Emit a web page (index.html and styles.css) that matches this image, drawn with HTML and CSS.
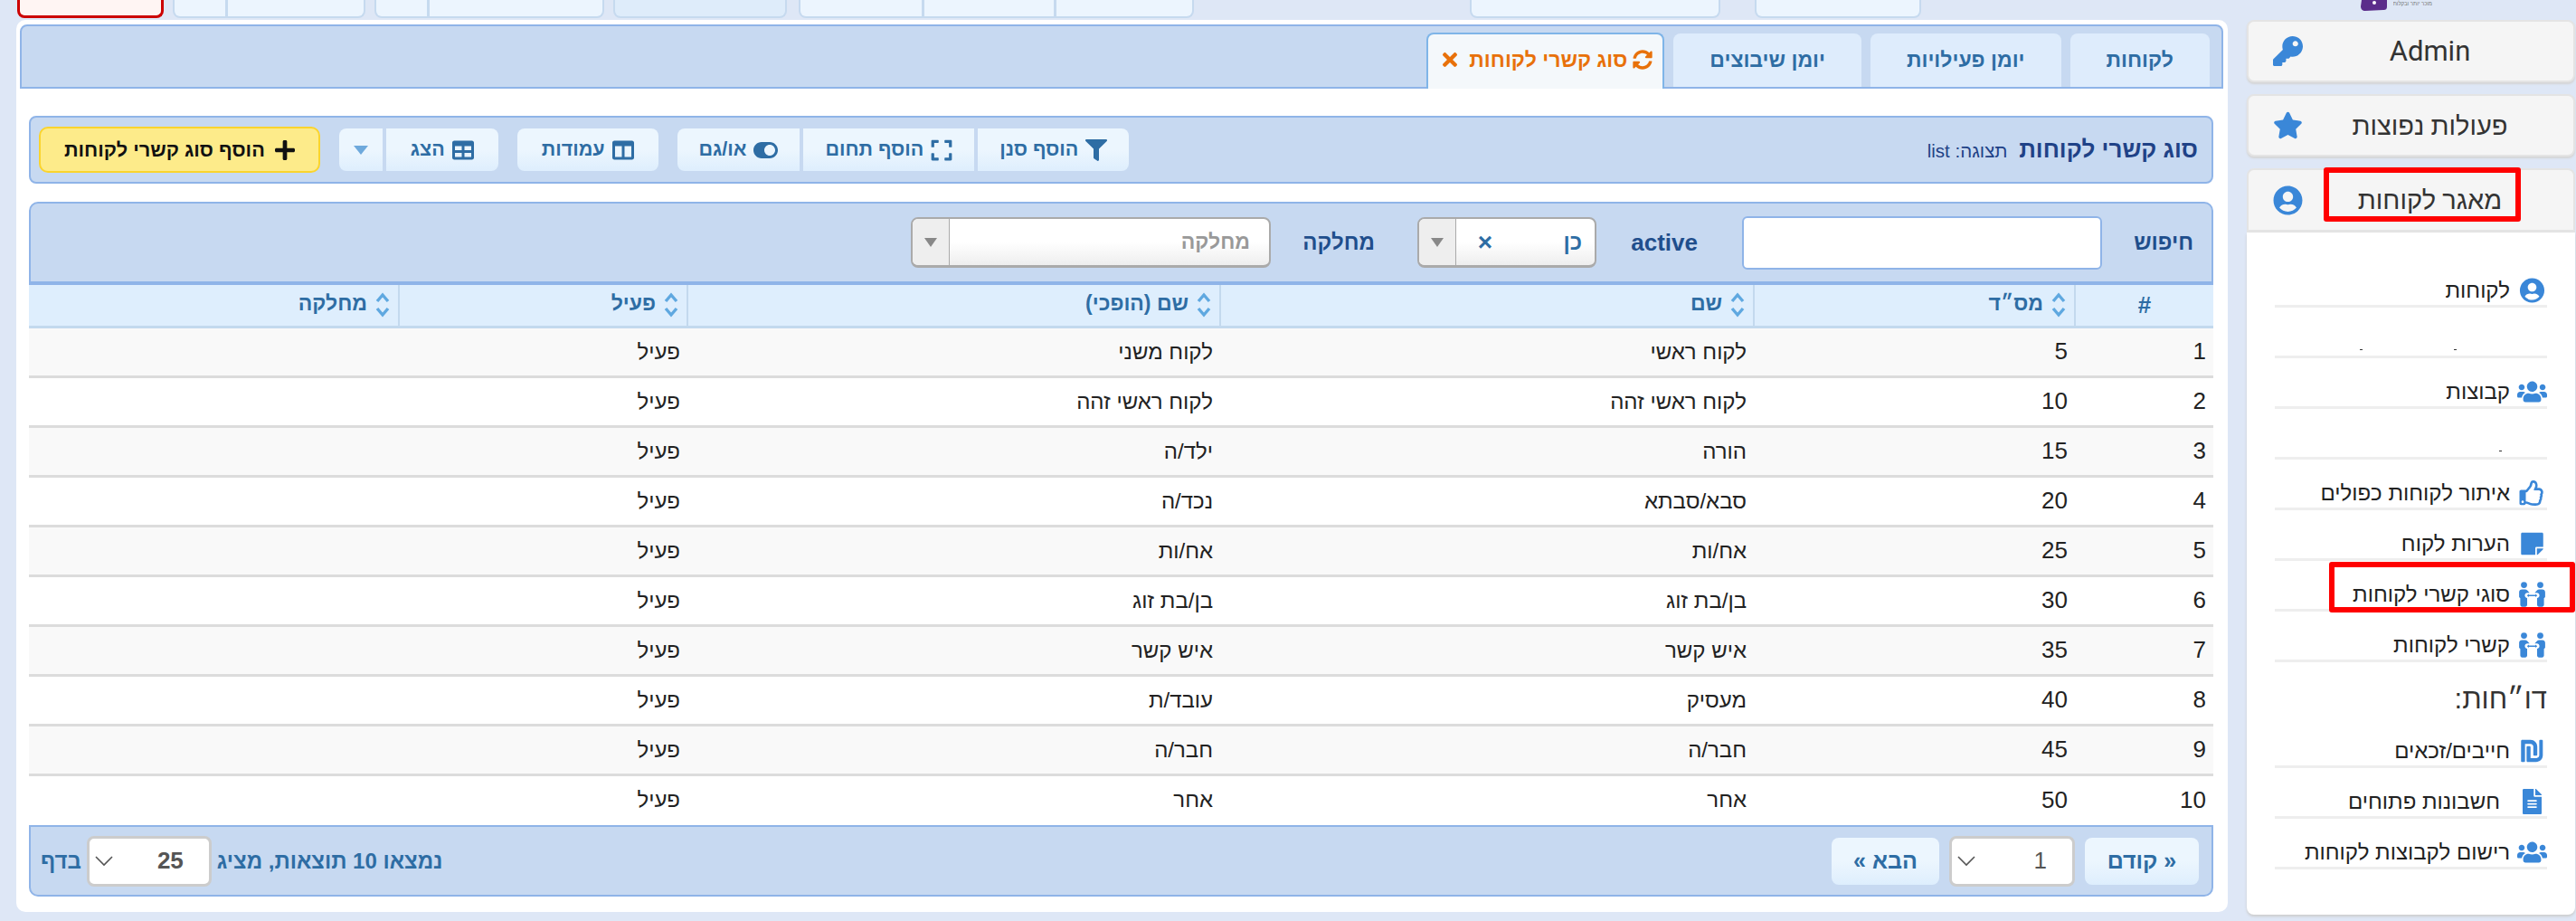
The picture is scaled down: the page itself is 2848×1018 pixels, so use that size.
FILE: index.html
```html
<!DOCTYPE html>
<html lang="he" dir="rtl">
<head>
    <meta charset="UTF-8">
    <title>סוג קשרי לקוחות</title>
    <link rel="stylesheet" href="styles.css">
</head>
<body>
    <svg class="sprite" xmlns="http://www.w3.org/2000/svg">
        <symbol id="i-star" viewBox="0 0 576 512"><path d="M259.3 17.8L194 150.2 47.9 171.5c-26.2 3.8-36.7 36.1-17.7 54.6l105.7 103-25 145.5c-4.5 26.3 23.2 46 46.4 33.7L288 439.6l130.7 68.7c23.2 12.2 50.9-7.4 46.4-33.7l-25-145.5 105.7-103c19-18.5 8.5-50.8-17.7-54.6L382 150.2 316.7 17.8c-11.7-23.6-45.6-23.9-57.4 0z"/></symbol>
        <symbol id="i-key" viewBox="0 0 512 512"><path d="M512 176.001C512 273.203 433.202 352 336 352c-11.22 0-22.19-1.062-32.827-3.069l-24.012 27.014A23.999 23.999 0 0 1 261.223 384H224v40c0 13.255-10.745 24-24 24h-40v40c0 13.255-10.745 24-24 24H24c-13.255 0-24-10.745-24-24v-78.059c0-6.365 2.529-12.47 7.029-16.971l161.802-161.802C163.108 213.814 160 195.271 160 176 160 78.798 238.797.001 335.999 0 433.488-.001 512 78.511 512 176.001zM336 128c0 26.51 21.49 48 48 48s48-21.49 48-48-21.49-48-48-48-48 21.49-48 48z"/></symbol>
        <symbol id="i-user" viewBox="0 0 496 512"><path d="M248 8C111 8 0 119 0 256s111 248 248 248 248-111 248-248S385 8 248 8zm0 96c48.6 0 88 39.4 88 88s-39.4 88-88 88-88-39.4-88-88 39.4-88 88-88zm0 344c-58.7 0-111.3-26.6-146.5-68.2 18.8-35.4 55.6-59.8 98.5-59.8 2.4 0 4.8.4 7.1 1.1 13 4.2 26.6 6.9 40.9 6.9 14.3 0 28-2.7 40.9-6.9 2.3-.7 4.7-1.1 7.1-1.1 42.9 0 79.7 24.4 98.5 59.8C359.3 421.4 306.7 448 248 448z"/></symbol>
        <symbol id="i-users" viewBox="0 0 640 512"><path d="M96 224c35.3 0 64-28.7 64-64s-28.7-64-64-64-64 28.7-64 64 28.7 64 64 64zm448 0c35.3 0 64-28.7 64-64s-28.7-64-64-64-64 28.7-64 64 28.7 64 64 64zm32 32h-64c-17.6 0-33.5 7.1-45.1 18.6 40.3 22.1 68.9 62 75.1 109.4h66c17.7 0 32-14.3 32-32v-32c0-35.3-28.7-64-64-64zm-256 0c61.9 0 112-50.1 112-112S381.9 32 320 32 208 82.1 208 144s50.1 112 112 112zm76.8 32h-8.3c-20.8 10-43.9 16-68.5 16s-47.6-6-68.5-16h-8.3C179.6 288 128 339.6 128 403.2V432c0 26.5 21.5 48 48 48h288c26.5 0 48-21.5 48-48v-28.8c0-63.6-51.6-115.2-115.2-115.2zm-223.7-13.4C161.5 263.1 145.6 256 128 256H64c-35.3 0-64 28.7-64 64v32c0 17.7 14.3 32 32 32h65.9c6.3-47.4 34.9-87.3 75.2-109.4z"/></symbol>
        <symbol id="i-thumb" viewBox="0 0 512 512"><path d="M466.27 286.69C475.04 271.84 480 256 480 236.85c0-44.015-37.218-85.58-85.82-85.58H357.7c4.92-12.81 8.85-28.13 8.85-46.54C366.55 31.936 328.86 0 271.28 0c-61.607 0-58.093 94.933-71.76 108.6-22.747 22.747-49.615 66.447-68.76 83.4H32c-17.673 0-32 14.327-32 32v240c0 17.673 14.327 32 32 32h64c14.893 0 27.408-10.174 30.978-23.95 44.509 1.001 75.06 39.94 177.802 39.94 7.22 0 15.22.01 22.22.01 77.117 0 111.986-39.423 112.94-95.33 13.319-18.425 20.299-43.122 17.34-66.99 9.854-18.452 13.664-40.343 8.99-62.99zm-61.75 53.83c12.56 21.13 1.26 49.41-13.94 57.57 7.7 48.78-17.608 65.9-53.12 65.9h-37.82c-71.639 0-118.029-37.82-171.64-37.82V240h10.92c28.36 0 67.98-70.89 94.54-97.46 28.36-28.36 18.91-75.63 37.82-94.54 47.27 0 47.27 32.98 47.27 56.73 0 39.17-28.36 56.72-28.36 94.54h103.99c21.11 0 37.73 18.91 37.82 37.82.09 18.9-12.82 37.81-28.36 37.81 22.27 2.34 20.43 53.87.73 60.37zM88 432c0 13.255-10.745 24-24 24s-24-10.745-24-24 10.745-24 24-24 24 10.745 24 24z"/></symbol>
        <symbol id="i-note" viewBox="0 0 448 512"><path d="M312 320h136V56c0-13.3-10.7-24-24-24H24C10.7 32 0 42.7 0 56v400c0 13.3 10.7 24 24 24h264V344c0-13.2 10.8-24 24-24zm129 55l-98 98c-4.5 4.5-10.6 7-17 7h-6V352h128v6.1c0 6.3-2.5 12.4-7 16.9z"/></symbol>
        <symbol id="i-people" viewBox="0 0 30 28">
            <circle cx="6" cy="3.6" r="3.4"/><circle cx="24" cy="3.6" r="3.4"/>
            <path d="M0.6 11.5C0.6 9.6 2 8.4 3.8 8.4h3.4c1 0 1.8.4 2.4 1.1l2.6 2.7h-2.4c-1.6 0-2.9 1.2-2.9 2.8 0 1.6 1.2 2.9 2.6 3.1v7.4c0 1.2-.9 2.2-2.1 2.2H4c-1.2 0-2.1-1-2.1-2.2v-7.2l-1.3-1.3z"/>
            <path d="M29.4 11.5C29.4 9.6 28 8.4 26.2 8.4h-3.4c-1 0-1.8.4-2.4 1.1l-2.6 2.7h2.4c1.6 0 2.9 1.2 2.9 2.8 0 1.6-1.2 2.9-2.6 3.1v7.4c0 1.2.9 2.2 2.1 2.2H26c1.2 0 2.1-1 2.1-2.2v-7.2l1.3-1.3z"/>
            <path d="M11.4 13.6l-2.2 1.7 2.2 1.7v-1h7.2v1l2.2-1.7-2.2-1.7v1h-7.2z"/>
        </symbol>
        <symbol id="i-shekel" viewBox="0 0 448 512"><path d="M248 168v168c0 8.84 7.16 16 16 16h48c8.84 0 16-7.16 16-16V168c0-75.11-60.89-136-136-136H24C10.75 32 0 42.74 0 56v408c0 8.84 7.16 16 16 16h48c8.84 0 16-7.16 16-16V112h112c30.93 0 56 25.07 56 56zM432 32h-48c-8.84 0-16 7.16-16 16v296c0 30.93-25.07 56-56 56H192V176c0-8.84-7.16-16-16-16h-48c-8.84 0-16 7.16-16 16v280c0 13.25 10.75 24 24 24h168c75.11 0 136-60.89 136-136V48c0-8.84-7.16-16-16-16z"/></symbol>
        <symbol id="i-file" viewBox="0 0 384 512"><path d="M224 136V0H24C10.7 0 0 10.7 0 24v464c0 13.3 10.7 24 24 24h336c13.3 0 24-10.7 24-24V160H248c-13.2 0-24-10.8-24-24zm64 236c0 6.6-5.4 12-12 12H108c-6.6 0-12-5.4-12-12v-8c0-6.6 5.4-12 12-12h168c6.6 0 12 5.4 12 12v8zm0-64c0 6.6-5.4 12-12 12H108c-6.6 0-12-5.4-12-12v-8c0-6.6 5.4-12 12-12h168c6.6 0 12 5.4 12 12v8zm0-72v8c0 6.6-5.4 12-12 12H108c-6.6 0-12-5.4-12-12v-8c0-6.6 5.4-12 12-12h168c6.6 0 12 5.4 12 12zm96-114.1v6.1H256V0h6.1c6.4 0 12.5 2.5 17 7l97.9 98c4.5 4.5 7 10.6 7 16.9z"/></symbol>
        <symbol id="i-filter" viewBox="0 0 512 512"><path d="M487.976 0H24.028C2.71 0-8.047 25.866 7.058 40.971L192 225.941V432c0 7.831 3.821 15.17 10.237 19.662l80 55.98C298.02 518.69 320 507.493 320 487.98V225.941l184.947-184.97C520.021 25.896 509.338 0 487.976 0z"/></symbol>
        <symbol id="i-expand" viewBox="0 0 448 512"><path d="M0 180V56c0-13.3 10.7-24 24-24h124c6.6 0 12 5.4 12 12v40c0 6.6-5.4 12-12 12H64v84c0 6.6-5.4 12-12 12H12c-6.6 0-12-5.4-12-12zM288 44v40c0 6.6 5.4 12 12 12h84v84c0 6.6 5.4 12 12 12h40c6.6 0 12-5.4 12-12V56c0-13.3-10.7-24-24-24H300c-6.6 0-12 5.4-12 12zm148 276h-40c-6.6 0-12 5.4-12 12v84h-84c-6.6 0-12 5.4-12 12v40c0 6.6 5.4 12 12 12h124c13.3 0 24-10.7 24-24V332c0-6.6-5.4-12-12-12zM160 468v-40c0-6.6-5.4-12-12-12H64v-84c0-6.6-5.4-12-12-12H12c-6.6 0-12 5.4-12 12v124c0 13.3 10.7 24 24 24h124c6.6 0 12-5.4 12-12z"/></symbol>
        <symbol id="i-toggle" viewBox="0 0 576 512"><path d="M384 64H192C86 64 0 150 0 256s86 192 192 192h192c106 0 192-86 192-192S490 64 384 64zm0 320c-70.8 0-128-57.3-128-128 0-70.8 57.3-128 128-128 70.8 0 128 57.3 128 128 0 70.8-57.3 128-128 128z"/></symbol>
        <symbol id="i-table" viewBox="0 0 512 512"><path d="M464 32H48C21.49 32 0 53.49 0 80v352c0 26.51 21.49 48 48 48h416c26.51 0 48-21.49 48-48V80c0-26.51-21.49-48-48-48zM224 416H64v-96h160v96zm0-160H64v-96h160v96zm224 160H288v-96h160v96zm0-160H288v-96h160v96z"/></symbol>
        <symbol id="i-columns" viewBox="0 0 512 512"><path d="M464 32H48C21.49 32 0 53.49 0 80v352c0 26.51 21.49 48 48 48h416c26.51 0 48-21.49 48-48V80c0-26.51-21.49-48-48-48zM224 416H64V160h160v256zm224 0H288V160h160v256z"/></symbol>
        <symbol id="i-plus" viewBox="0 0 448 512"><path d="M416 208H272V64c0-17.67-14.33-32-32-32h-32c-17.67 0-32 14.33-32 32v144H32c-17.67 0-32 14.33-32 32v32c0 17.67 14.33 32 32 32h144v144c0 17.67 14.33 32 32 32h32c17.67 0 32-14.33 32-32V304h144c17.67 0 32-14.33 32-32v-32c0-17.67-14.33-32-32-32z"/></symbol>
        <symbol id="i-sync" viewBox="0 0 512 512"><path d="M370.72 133.28C339.458 104.008 298.888 87.962 255.848 88c-77.458.068-144.328 53.178-162.791 126.85-1.344 5.363-6.122 9.15-11.651 9.15H24.103c-7.498 0-13.194-6.807-11.807-14.176C33.933 94.924 134.813 8 256 8c66.448 0 126.791 26.136 171.315 68.685L463.03 40.97C478.149 25.851 504 36.559 504 57.941V192c0 13.255-10.745 24-24 24H345.941c-21.382 0-32.09-25.851-16.971-40.971l41.75-41.749zM32 296h134.059c21.382 0 32.09 25.851 16.971 40.971l-41.75 41.75c31.262 29.273 71.835 45.319 114.876 45.28 77.418-.07 144.315-53.144 162.787-126.849 1.344-5.363 6.122-9.15 11.651-9.15h57.304c7.498 0 13.194 6.807 11.807 14.176C478.067 417.076 377.187 504 256 504c-66.448 0-126.791-26.136-171.315-68.685L48.97 471.03C33.851 486.149 8 475.441 8 454.059V320c0-13.255 10.745-24 24-24z"/></symbol>
        <symbol id="i-times" viewBox="0 0 352 512"><path d="M242.72 256l100.07-100.07c12.28-12.28 12.28-32.19 0-44.48l-22.24-22.24c-12.28-12.28-32.19-12.28-44.48 0L176 189.28 75.93 89.21c-12.28-12.28-32.19-12.28-44.48 0L9.21 111.45c-12.28 12.28-12.28 32.19 0 44.48L109.28 256 9.21 356.07c-12.28 12.28-12.28 32.19 0 44.48l22.24 22.24c12.28 12.28 32.2 12.28 44.48 0L176 322.72l100.07 100.07c12.28 12.28 32.2 12.28 44.48 0l22.24-22.24c12.28-12.28 12.28-32.19 0-44.48L242.72 256z"/></symbol>
        <symbol id="i-sort" viewBox="0 0 18 30"><path d="M3 11l6-7 6 7M3 19l6 7 6-7" fill="none" stroke="currentColor" stroke-width="3.4"/></symbol>
        <symbol id="i-chevron" viewBox="0 0 20 12"><path d="M1 1l9 9 9-9" fill="none" stroke="currentColor" stroke-width="1.6"/></symbol>
    </svg>

    <div class="page">
        <!-- main column -->
        <div class="main-col">
            <div class="top-strip">
                <div class="strip-btn w184"></div>
                <div class="strip-btn w277"></div>
                <div class="strip-group w437 far">
                    <span class="w150"></span><span class="w143"></span><span></span>
                </div>
                <div class="strip-btn w192 dark"></div>
                <div class="strip-group w254"><span></span><span class="w55"></span></div>
                <div class="strip-group w213"><span></span><span class="w55"></span></div>
                <div class="strip-btn w162 danger"></div>
            </div>

            <div class="content">
                <div class="tab-bar">
                    <a class="tab">לקוחות</a>
                    <a class="tab">יומן פעילויות</a>
                    <a class="tab">יומן שיבוצים</a>
                    <a class="tab active">
                        <svg class="icon tab-sync"><use href="#i-sync"/></svg>
                        <span>סוג קשרי לקוחות</span>
                        <svg class="icon tab-close"><use href="#i-times"/></svg>
                    </a>
                </div>

                <div class="toolbar">
                    <div class="page-title">
                        <strong>סוג קשרי לקוחות</strong>
                        <span>תצוגה: list</span>
                    </div>
                    <div class="toolbar-actions">
                        <div class="btn-group">
                            <button class="btn"><svg class="icon"><use href="#i-filter"/></svg>הוסף סנן</button>
                            <button class="btn"><svg class="icon"><use href="#i-expand"/></svg>הוסף תחום</button>
                            <button class="btn"><svg class="icon wide"><use href="#i-toggle"/></svg>או/גם</button>
                        </div>
                        <button class="btn btn-roomy"><svg class="icon"><use href="#i-columns"/></svg>עמודות</button>
                        <div class="btn-group">
                            <button class="btn btn-roomy"><svg class="icon"><use href="#i-table"/></svg>הצג</button>
                            <button class="btn btn-caret"><i class="caret"></i></button>
                        </div>
                        <button class="btn-add"><svg class="icon"><use href="#i-plus"/></svg>הוסף סוג קשרי לקוחות</button>
                    </div>
                </div>

                <div class="grid-panel">
                    <div class="search-bar">
                        <label class="search-label">חיפוש</label>
                        <input type="text" class="search-input">
                        <label class="filter-label latin">active</label>
                        <div class="chosen short">
                            <span class="chosen-value">כן</span>
                            <span class="chosen-clear">×</span>
                            <span class="chosen-arrow"><i></i></span>
                        </div>
                        <label class="filter-label">מחלקה</label>
                        <div class="chosen">
                            <span class="chosen-placeholder">מחלקה</span>
                            <span class="chosen-arrow"><i></i></span>
                        </div>
                    </div>

                    <table class="grid">
                        <colgroup>
                            <col class="c-num"><col class="c-order"><col class="c-name"><col class="c-rev"><col class="c-active"><col>
                        </colgroup>
                        <thead>
                            <tr>
                                <th class="center">#</th>
                                <th><svg class="sort"><use href="#i-sort"/></svg>מס״ד</th>
                                <th><svg class="sort"><use href="#i-sort"/></svg>שם</th>
                                <th><svg class="sort"><use href="#i-sort"/></svg>שם (הופכי)</th>
                                <th><svg class="sort"><use href="#i-sort"/></svg>פעיל</th>
                                <th><svg class="sort"><use href="#i-sort"/></svg>מחלקה</th>
                            </tr>
                        </thead>
                        <tbody>
                            <tr><td>1</td><td>5</td><td>לקוח ראשי</td><td>לקוח משני</td><td>פעיל</td><td></td></tr>
                            <tr><td>2</td><td>10</td><td>לקוח ראשי זהה</td><td>לקוח ראשי זהה</td><td>פעיל</td><td></td></tr>
                            <tr><td>3</td><td>15</td><td>הורה</td><td>ילד/ה</td><td>פעיל</td><td></td></tr>
                            <tr><td>4</td><td>20</td><td>סבא/סבתא</td><td>נכד/ה</td><td>פעיל</td><td></td></tr>
                            <tr><td>5</td><td>25</td><td>אח/ות</td><td>אח/ות</td><td>פעיל</td><td></td></tr>
                            <tr><td>6</td><td>30</td><td>בן/בת זוג</td><td>בן/בת זוג</td><td>פעיל</td><td></td></tr>
                            <tr><td>7</td><td>35</td><td>איש קשר</td><td>איש קשר</td><td>פעיל</td><td></td></tr>
                            <tr><td>8</td><td>40</td><td>מעסיק</td><td>עובד/ת</td><td>פעיל</td><td></td></tr>
                            <tr><td>9</td><td>45</td><td>חבר/ה</td><td>חבר/ה</td><td>פעיל</td><td></td></tr>
                            <tr><td>10</td><td>50</td><td>אחר</td><td>אחר</td><td>פעיל</td><td></td></tr>
                        </tbody>
                    </table>

                    <div class="pager">
                        <div class="pager-nav">
                            <button class="btn pager-prev">« קודם</button>
                            <div class="page-select wide"><span>1</span><svg class="chev"><use href="#i-chevron"/></svg></div>
                            <button class="btn pager-next">הבא »</button>
                        </div>
                        <div class="pager-info">
                            <span>נמצאו 10 תוצאות, מציג</span>
                            <div class="page-select strong"><span>25</span><svg class="chev"><use href="#i-chevron"/></svg></div>
                            <span>בדף</span>
                        </div>
                    </div>
                </div>
            </div>
        </div>

        <aside class="sidebar">
            <div class="logo">
                <span class="logo-text">מוכר יותר ובקלות</span>
                <svg class="logo-mark" viewBox="0 0 30 12"><path d="M2 0h28v7c0 3-1 4-4 4L6 12C3 12 1 10 1 7z"/><circle cx="16" cy="3" r="2" fill="#fff"/></svg>
            </div>
            <div class="panel"><span class="panel-title latin">Admin</span><svg class="icon panel-icon"><use href="#i-key"/></svg></div>
            <div class="panel"><span class="panel-title">פעולות נפוצות</span><svg class="icon panel-icon"><use href="#i-star"/></svg></div>
            <div class="panel open"><span class="panel-title">מאגר לקוחות</span><svg class="icon panel-icon"><use href="#i-user"/></svg></div>
            <div class="panel-body">
                <a class="item"><svg class="icon"><use href="#i-user"/></svg><span>לקוחות</span></a>
                <a class="item blank"><i class="speck s1"></i><i class="speck s2"></i></a>
                <a class="item"><svg class="icon"><use href="#i-users"/></svg><span>קבוצות</span></a>
                <a class="item blank"><i class="speck s3"></i></a>
                <a class="item"><svg class="icon"><use href="#i-thumb"/></svg><span>איתור לקוחות כפולים</span></a>
                <a class="item"><svg class="icon"><use href="#i-note"/></svg><span>הערות לקוח</span></a>
                <a class="item"><svg class="icon"><use href="#i-people"/></svg><span>סוגי קשרי לקוחות</span></a>
                <a class="item"><svg class="icon"><use href="#i-people"/></svg><span>קשרי לקוחות</span></a>
                <h3 class="panel-heading">דו״חות:</h3>
                <a class="item"><svg class="icon"><use href="#i-shekel"/></svg><span>חייבים/זכאים</span></a>
                <a class="item indent"><svg class="icon"><use href="#i-file"/></svg><span>חשבונות פתוחים</span></a>
                <a class="item"><svg class="icon"><use href="#i-users"/></svg><span>רישום לקבוצות לקוחות</span></a>
            </div>
        </aside>
    </div>

    <!-- annotation boxes drawn over the sidebar -->
    <div class="mark mark-head"></div>
    <div class="mark mark-item"></div>
</body>
</html>
```

FILE: styles.css
```css
html, body { margin: 0; padding: 0; }
body { width: 2848px; height: 1018px; overflow: hidden; position: relative; background: #dee7f6; font-family: "Liberation Sans", Arial, sans-serif; font-size: 24px; color: #222; }
.sprite { display: none; }
.icon { width: 24px; height: 26px; fill: currentColor; flex: none; }

.page { display: flex; gap: 21px; padding: 0 1px 0 18px; height: 1018px; box-sizing: border-box; direction: ltr; }
.main-col { width: 2445px; direction: rtl; }
.sidebar { width: 363px; direction: rtl; }

/* clipped buttons along the top */
.top-strip { height: 22px; display: flex; gap: 10px; padding-right: 339px; box-sizing: border-box; }
.strip-btn, .strip-group { height: 20px; box-sizing: border-box; background: #ecf5fe; border: 2px solid #c6daef; border-top: none; border-radius: 0 0 8px 8px; }
.strip-btn.w277 { margin-right: 28px; }
.strip-group { display: flex; }
.strip-group span { flex: 1; border-left: 3px solid #c6daef; }
.strip-group span:last-child { border-left: none; }
.strip-group span.w150 { flex: none; width: 150px; }
.strip-group span.w143 { flex: none; width: 143px; }
.strip-group span.w55 { flex: none; width: 56px; }
.strip-btn.dark { background: #deecfa; margin-right: 3px; }
.strip-btn.danger { background: #fff5f3; border: 3px solid #cc0000; border-top: none; }
.w162 { width: 162px; }
.w184 { width: 184px; }
.w192 { width: 192px; }
.w213 { width: 213px; }
.w254 { width: 254px; }
.w277 { width: 277px; }
.w437 { width: 437px; }
.far { margin-right: 295px; }

.content { background: #fff; border-radius: 10px; height: 986px; padding: 5px 5px 0 4px; box-sizing: border-box; }

/* tabs */
.tab-bar { height: 71px; box-sizing: border-box; display: flex; align-items: flex-end; gap: 10px; padding-right: 13px; background: #c7d9f1; border: 2px solid #8fb4e8; border-radius: 8px 8px 0 0; }
.tab { height: 59px; box-sizing: border-box; display: flex; align-items: center; padding: 0 40px; background: #deecfc; color: #2e6da4; font-size: 23px; font-weight: bold; border-radius: 8px 8px 0 0; }
.tab.active { height: 62px; margin-bottom: -2px; padding: 0 11px 4px 16px; background: #f4f8fb; color: #e8710a; border: 2px solid #7fb5e8; border-bottom: none; gap: 6px; }
.tab-sync { width: 22px; }
.tab-close { width: 16px; height: 24px; margin-right: 7px; }

/* toolbar */
.toolbar { height: 75px; box-sizing: border-box; margin: 30px 11px 0 10px; padding: 0 15px 0 9px; display: flex; align-items: center; justify-content: space-between; background: #c7d9f1; border: 2px solid #8fb4e8; border-radius: 8px; }
.page-title strong { font-size: 26px; color: #1f4287; margin-left: 6px; }
.page-title span { font-size: 20.5px; color: #1f4287; }
.toolbar-actions { display: flex; align-items: center; gap: 21px; }
.btn-group { display: flex; gap: 4px; }
.btn { height: 47px; display: flex; align-items: center; gap: 8px; padding: 0 24px; border: none; border-radius: 8px; background: linear-gradient(#ecf6fe 50%, #deeefd); color: #2e6da4; font: bold 21.5px "Liberation Sans", Arial, sans-serif; }
.btn-roomy { padding: 0 27px; }
.btn-group .btn { border-radius: 0; }
.btn-group .btn:first-child { border-radius: 0 8px 8px 0; }
.btn-group .btn:last-child { border-radius: 8px 0 0 8px; }
.icon.wide { width: 27px; }
.btn-caret { width: 48px; padding: 0; justify-content: center; }
.caret { border: 8px solid transparent; border-top: 10px solid #6ea9dc; border-bottom: none; }
.btn-add { height: 51px; display: flex; align-items: center; gap: 11px; padding: 0 26px; background: #fdeb8a; border: 2px solid #fad42e; border-radius: 10px; color: #111; font: bold 21.7px "Liberation Sans", Arial, sans-serif; }
.btn-add .icon { width: 22px; }

/* search + table */
.grid-panel { margin: 20px 11px 0 10px; }
.search-bar { height: 92px; box-sizing: border-box; display: flex; align-items: center; padding-right: 20px; background: #c7d9f1; border: 2px solid #8fb4e8; border-bottom-width: 4px; border-radius: 10px 10px 0 0; font-weight: bold; color: #1f4e8c; }
.search-label { width: 62px; margin-left: 39px; }
.search-input { width: 398px; height: 59px; box-sizing: border-box; margin-left: 49px; background: #fff; border: 2px solid #8fb4e8; border-radius: 6px; }
.filter-label { width: 76px; margin-left: 39px; }
.filter-label.latin { width: 72px; margin-left: 40px; font-size: 26px; }
.chosen { width: 398px; height: 56px; box-sizing: border-box; display: flex; align-items: center; background: linear-gradient(#fff 50%, #eee); border: 2px solid #aaa; border-bottom-width: 3px; border-radius: 8px; }
.chosen.short { width: 198px; margin-left: 47px; }
.chosen-placeholder { flex: 1; padding-right: 21px; color: #999; font-size: 23px; }
.chosen-value { flex: 1; padding-right: 14px; color: #2e6da4; font-size: 24px; }
.chosen-clear { width: 64px; color: #2e6da4; font-size: 28px; text-align: center; }
.chosen-arrow { width: 40px; height: 100%; display: flex; align-items: center; justify-content: center; background: #eee; border-right: 1px solid #aaa; border-radius: 6px 0 0 6px; }
.chosen-arrow i { border: 7px solid transparent; border-top: 10px solid #888; border-bottom: none; }

.grid { width: 100%; table-layout: fixed; border-collapse: collapse; }
.c-num { width: 153px; }
.c-order { width: 355px; }
.c-name { width: 590px; }
.c-rev { width: 589px; }
.c-active { width: 319px; }
.grid th { height: 46px; box-sizing: border-box; padding: 0 8px 0 0; background: #deeefd; color: #2e6da4; font-size: 23px; text-align: right; border-left: 2px solid #c3d9ee; border-bottom: 3px solid #c3d9ee; }
.grid th:last-child { border-left: none; }
.grid th.center { text-align: center; padding: 0; font-size: 26px; }
.sort { width: 18px; height: 30px; margin-left: 8px; vertical-align: middle; color: #5fa8e0; }
.grid td { height: 55px; box-sizing: border-box; padding: 0 8px 0 0; text-align: right; border-bottom: 3px solid #dcdcdc; }
.grid td:nth-child(-n+2) { font-size: 26px; }
.grid tbody tr:nth-child(odd) td { background: #f9f9f9; }
.grid tbody tr:last-child td { border-bottom: none; }

.pager { height: 79px; box-sizing: border-box; margin-top: 1px; display: flex; align-items: center; justify-content: space-between; padding: 0 14px 0 11px; background: #c7d9f1; border: 2px solid #8fb4e8; border-radius: 0 0 10px 10px; font-weight: bold; color: #2e6da4; }
.pager-nav, .pager-info { display: flex; align-items: center; }
.pager-nav { gap: 11px; }
.pager-info { gap: 6px; }
.pager .btn { height: 52px; justify-content: center; font-size: 25px; }
.pager-prev { width: 126px; padding: 0; }
.pager-next { width: 119px; padding: 0; }
.page-select { width: 138px; height: 56px; box-sizing: border-box; display: flex; align-items: center; justify-content: space-between; padding: 0 28px 0 6px; background: #fff; border: 3px solid #ccc; border-radius: 8px; color: #555; font-size: 26px; font-weight: normal; }
.page-select.wide { width: 139px; }
.page-select.strong { font-weight: bold; }
.chev { width: 20px; height: 12px; color: #555; }

/* sidebar */
.logo { height: 22px; display: flex; gap: 7px; padding-right: 158px; overflow: hidden; box-sizing: border-box; }
.logo-text { width: 43px; font-size: 6px; line-height: 8px; color: #777; white-space: nowrap; overflow: hidden; }
.logo-mark { width: 30px; height: 12px; fill: #5b2d8a; }
.panel { height: 69px; margin-bottom: 13px; box-sizing: border-box; display: flex; align-items: center; padding: 0 18px 0 27px; background: #f5f5f5; border: 2px solid #e4e4e4; border-radius: 8px; box-shadow: 0 2px 2px #d5d5d5; }
.panel-title { flex: 1; text-align: center; font-family: Roboto, "Liberation Sans", sans-serif; font-size: 29px; color: #333; }
.panel-title.latin { font-size: 31px; }
.panel-icon { width: 33px; height: 33px; color: #3a87d8; }
.panel.open { margin-bottom: 0; height: 71px; border-radius: 8px 8px 0 0; box-shadow: none; border-bottom-width: 3px; }
.panel-body { height: 754px; box-sizing: border-box; padding: 27px 31px 0 31px; background: #fff; border-radius: 0 0 8px 8px; box-shadow: 0 2px 3px #ccc; }
.item { height: 56px; box-sizing: border-box; display: flex; align-items: center; gap: 8px; border-bottom: 3px solid #eee; color: #222; padding-top: 20px; position: relative; }
.item .icon { width: 33px; height: 28px; color: #3a87d8; }
.item.indent span { margin-right: 11px; }
.speck { position: absolute; bottom: 6px; width: 3px; height: 1px; background: #333; }
.s1 { left: 94px; }
.s2 { left: 198px; }
.s3 { left: 248px; }
.panel-heading { height: 61px; box-sizing: border-box; margin: 0; padding-top: 20px; display: flex; align-items: center; font-size: 31px; font-weight: normal; color: #333; }

/* red annotation boxes */
.mark { position: absolute; box-sizing: border-box; border: 6px solid #f00; border-radius: 3px; }
.mark-head { left: 2569px; top: 185px; width: 218px; height: 60px; }
.mark-item { left: 2575px; top: 621px; width: 272px; height: 56px; }
```
